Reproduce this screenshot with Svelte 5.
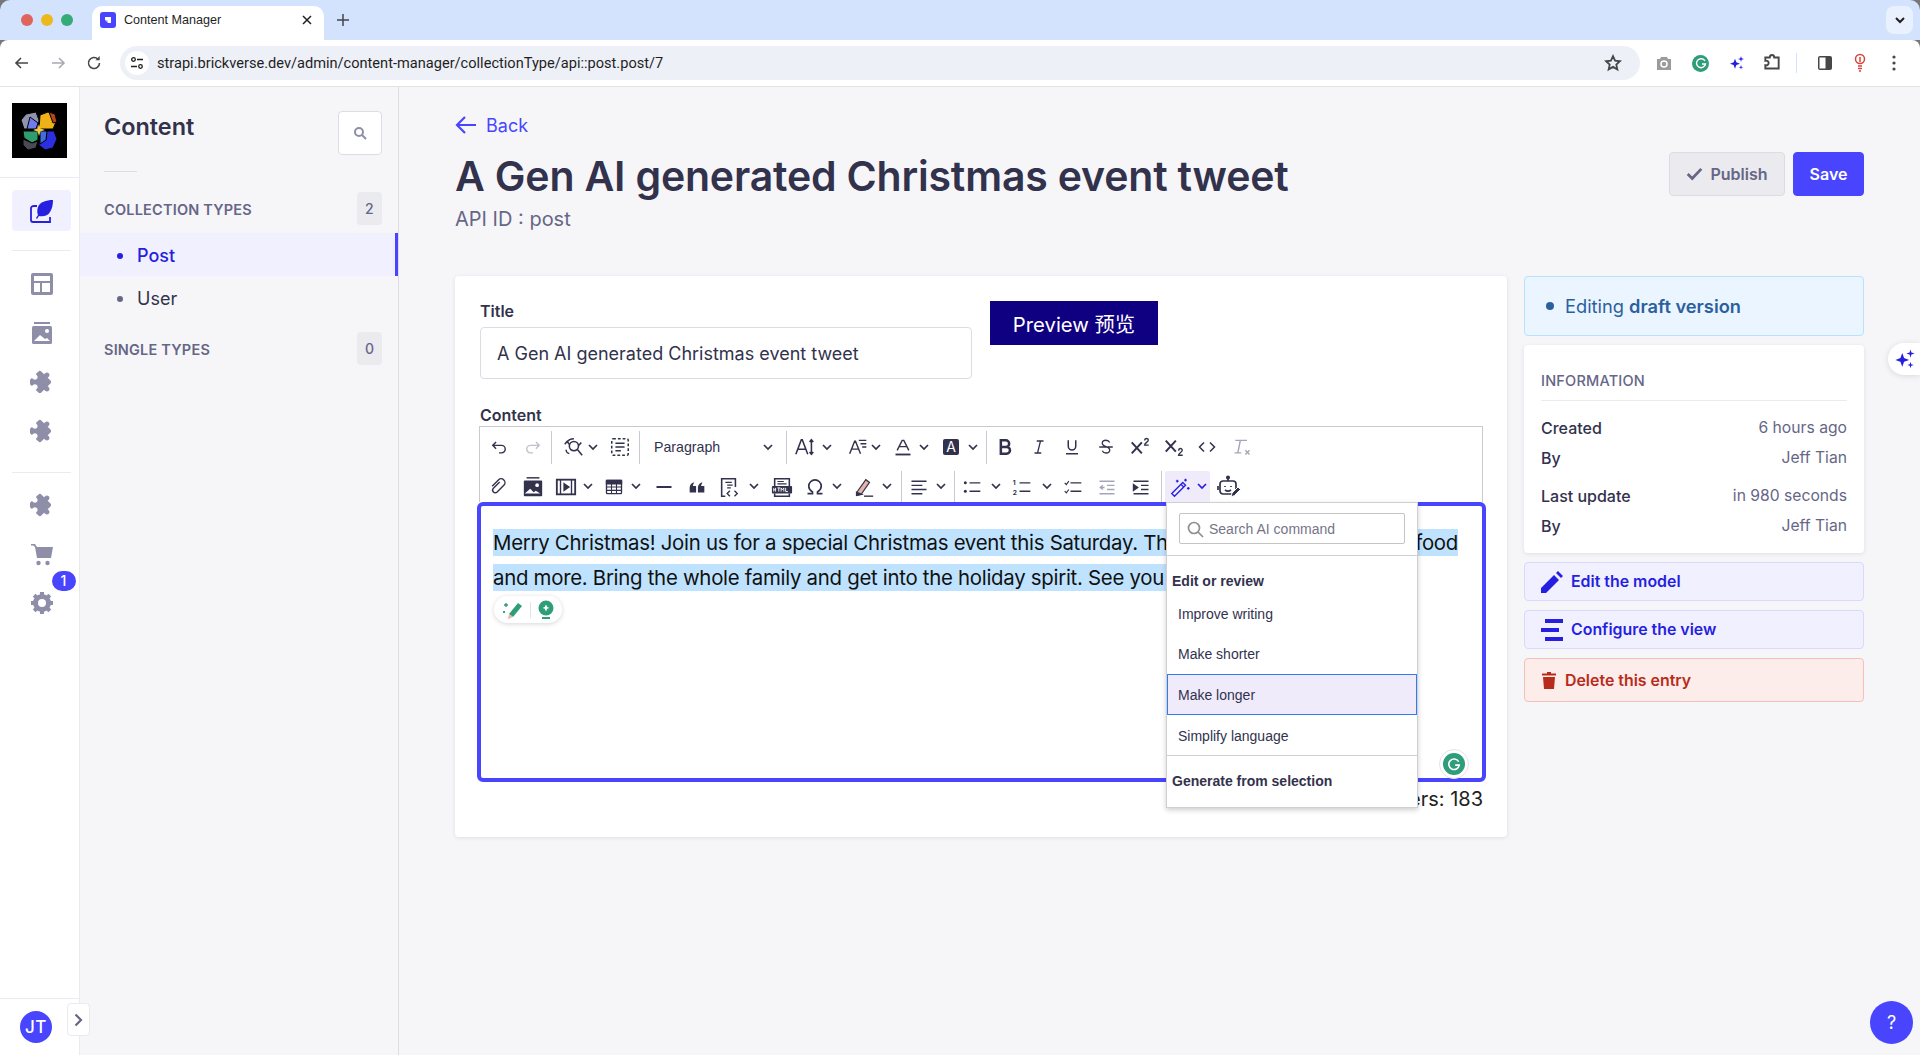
<script>
  // toolbar items are listed by the centre x of each button, gaps are derived below
  const icons = {
    undo: '<path d="M8.500 6 4.500 10l4 4M5 10h10a4.500 4.500 0 0 1 0 9h-3"/>',
    redo: '<path d="M15.500 6l4 4-4 4M19 10H9a4.500 4.500 0 0 0 0 9h3"/>',
    find: '<circle cx="13" cy="11" r="5"/><path d="m17 15 5 6M3 9l2.500-3L8 9M21 7l-2.500 3"/><path d="M5.500 7C7 4 10 3 13 3M8 19c-2 0-3.500-2-3.500-4"/>',
    selectall: '<rect x="3" y="3" width="18" height="18" rx="1.500" stroke-dasharray="3 2.200"/><path d="M7 8h10M7 12h10M7 16h6"/>',
    size: '<path d="M2 20 8 4h1l6 16M4.500 14.500h9M19 4v16M17 6.500 19 4l2 2.500M17 17.500l2 2.500 2-2.500"/>',
    family: '<path d="M2 20 8 5h1l6 15M4.500 14.500h8M13 4h9M15 8h7M17 12h5"/>',
    color: '<path d="M5 16 11 4h2l6 12M7.500 11.500h9"/><path d="M3 21h18" stroke-width="2.200"/>',
    bold: '<path d="M7 4h6a4 4 0 0 1 0 8H7zM7 12h7a4 4 0 0 1 0 8H7z" stroke-width="3"/>',
    italic: '<path d="M9 4h9M6 20h9M14 4l-4 16"/>',
    underline: '<path d="M7 3v8a5 5 0 0 0 10 0V3M4 21h16" stroke-width="2"/>',
    strike: '<path d="M17 6c-1-2-3-3-5-3-3 0-5 1.500-5 4s2 3.500 5 4.500c3 1 5 2 5 4.500s-2 4-5 4c-2 0-4-1-5-3M3 12h18"/>',
    sup: '<path d="M3 7l11 12M14 7 3 19" stroke-width="2.200"/><path d="M17 5c0-3 4-3 4-.5 0 2-4 3-4 5.500h4.500" stroke-width="1.500"/>',
    sub: '<path d="M3 5l11 12M14 5 3 17" stroke-width="2.200"/><path d="M17 16c0-3 4-3 4-.5 0 2-4 3-4 5.500h4.500" stroke-width="1.500"/>',
    code: '<path d="m8 6-6 6 6 6M16 6l6 6-6 6" stroke-width="2"/>',
    clear: '<g stroke="#a5a5ba"><path d="M4 4h14M10 4 7 19M3 19h8M16 16l5 5M21 16l-5 5"/></g>',
    link: '<path d="M14 6 6.500 13.500a3 3 0 0 0 4.500 4.500l8-8a4.500 4.500 0 0 0-6.500-6.500L5 11"/>',
    image: '<path d="M5 2h14" stroke-width="1.600"/><rect x="2" y="5" width="20" height="17" fill="#32324d" stroke="none" rx="1"/><circle cx="16.500" cy="10" r="2" fill="#fff" stroke="none"/><path d="m3 19 6-5 5 5H3zM11 19l4-3 5 3h-9z" fill="#fff" stroke="none"/>',
    media: '<rect x="2" y="4" width="20" height="16" stroke-width="2"/><path d="M6 4v16M18 4v16" stroke-width="1.500"/><path d="m10 8.500 5 3.500-5 3.500z" fill="#32324d"/>',
    table: '<rect x="3" y="4" width="18" height="16" rx="1" stroke-width="1.600"/><path d="M3 4h18v4H3z" fill="#32324d"/><path d="M3 12h18M3 16h18M9 8v12M15 8v12" stroke-width="1.300"/>',
    hr: '<path d="M3 12h18" stroke-width="2.400"/>',
    quote: '<path d="M4 18v-5c0-3 2-6 5-6-1 1.500-1.500 3-1.500 4H11v7zM13 18v-5c0-3 2-6 5-6-1 1.500-1.500 3-1.500 4H20v7z" fill="#32324d" stroke="none"/>',
    snippet: '<path d="M8 22H4V3h15v9"/><path d="M8 7h7M10 10h6M10 13h4" stroke-width="1.300"/><path d="m13 16-3 3 3 3M18 16l3 3-3 3" stroke-width="1.500"/>',
    html: '<path d="M4 11V3h16v8M4 19v3h16v-3"/><path d="M7 6h7M7 8.500h10" stroke-width="1.300"/><rect x="1" y="11" width="22" height="8" rx="1" fill="#32324d" stroke="none"/><path d="M3 13v4M3 15h2M5 13v4M7 13h3M8.500 13v4M11 17v-4l1.500 2 1.500-2v4M16 13v4h2.500" stroke="#fff" stroke-width="1"/>',
    omega: '<path d="M3 20h6v-2c-3-2-4.500-4-4.500-7a7.500 7.500 0 0 1 15 0c0 3-1.500 5-4.500 7v2h6" stroke-width="2"/>',
    pen: '<path d="M4 18 14 4l4 3L9 20l-5 1z" fill="#e7b3a6" stroke="#32324d" stroke-width="1.300"/><path d="M4 18l5 2-5 1z" fill="#32324d"/><path d="M12 22h10" stroke-width="1.500"/>',
    align: '<path d="M3 5h18M3 10h13M3 15h18M3 20h13"/>',
    bullets: '<circle cx="4" cy="7" r="1.800" fill="#32324d" stroke="none"/><circle cx="4" cy="17" r="1.800" fill="#32324d" stroke="none"/><path d="M9 7h13M9 17h13"/>',
    numbers: '<text x="1" y="10" font-size="8" font-family="Inter" font-weight="700" fill="#32324d" stroke="none">1</text><text x="1" y="21" font-size="8" font-family="Inter" font-weight="700" fill="#32324d" stroke="none">2</text><path d="M9 7h13M9 17h13"/>',
    todo: '<path d="m2 7 2 2 3-4M2 17l2 2 3-4" stroke-width="1.400"/><path d="M9 7h13M9 17h13"/>',
    outdent: '<g stroke="#a5a5ba"><path d="M3 5h18M12 10h9M12 15h9M3 20h18M9 12.500H4"/><path d="m7 10-3 2.500 3 2.500"/></g>',
    indent: '<path d="M3 5h18M12 10h9M12 15h9M3 20h18"/><path d="m3 9 5 3.500-5 3.500z" fill="#32324d"/>',
    wand: '<g stroke="#271fe0"><path d="M3 19 15 7l3 3L6 22z"/><path d="m13 9 3 3M18 3v3M16.500 4.500h3M9 4v3M7.500 5.500h3M21 12v3M19.500 13.500h3" stroke-width="1.300"/></g>',
    robot: '<rect x="3" y="6" width="16" height="13" rx="3"/><path d="M11 6V3M1 11v4M8 11v1M14 11v1M8 15c2 1.500 4 1.500 6 0"/><circle cx="11" cy="2.500" r="1.200" fill="#32324d"/><path d="m14 22 1-4 6-6 2.500 2.500-6 6z" fill="#32324d" stroke="#fff" stroke-width="1"/>'
  };

  const row1 = [
    { i: 'undo', c: 500, s: 20 }, { i: 'redo', c: 534, s: 20, dim: true }, { sep: true, c: 552 },
    { i: 'find', c: 574, s: 22 }, { caret: true, c: 594 }, { i: 'selectall', c: 621, s: 22 }, { sep: true, c: 640 },
    { label: 'Paragraph', c: 712, w: 114 }, { caret: true, c: 769 }, { sep: true, c: 787 },
    { i: 'size', c: 806, s: 22 }, { caret: true, c: 828 }, { i: 'family', c: 859, s: 20 }, { caret: true, c: 877 },
    { i: 'color', c: 904, s: 20 }, { caret: true, c: 925 }, { box: true, c: 952, w: 16 }, { caret: true, c: 974 }, { sep: true, c: 987 },
    { i: 'bold', c: 1006, s: 20 }, { i: 'italic', c: 1040, s: 18 }, { i: 'underline', c: 1073, s: 18 }, { i: 'strike', c: 1107, s: 18 },
    { i: 'sup', c: 1141, s: 22 }, { i: 'sub', c: 1175, s: 22 }, { i: 'code', c: 1208, s: 18 }, { i: 'clear', c: 1243, s: 20 }
  ];
  const row2 = [
    { i: 'link', c: 499, s: 20 }, { i: 'image', c: 534, s: 22 }, { i: 'media', c: 567, s: 22 }, { caret: true, c: 589 },
    { i: 'table', c: 615, s: 20 }, { caret: true, c: 637 }, { i: 'hr', c: 665, s: 20 }, { i: 'quote', c: 698, s: 22 },
    { i: 'snippet', c: 730, s: 22 }, { caret: true, c: 755 }, { i: 'html', c: 783, s: 22 }, { i: 'omega', c: 816, s: 20 }, { caret: true, c: 838 },
    { i: 'pen', c: 865, s: 22 }, { caret: true, c: 888 }, { sep: true, c: 902 },
    { i: 'align', c: 920, s: 20 }, { caret: true, c: 942 }, { sep: true, c: 955 },
    { i: 'bullets', c: 973, s: 20 }, { caret: true, c: 997 }, { i: 'numbers', c: 1023, s: 20 }, { caret: true, c: 1048 },
    { i: 'todo', c: 1074, s: 20 }, { i: 'outdent', c: 1108, s: 20 }, { i: 'indent', c: 1142, s: 20 }, { sep: true, c: 1162 },
    { wand: true, c: 1188.500, w: 45 }, { i: 'robot', c: 1230, s: 24 }
  ];

  // turn centres into left margins, so the rows stay plain flex rows
  function place(items) {
    let edge = 481;
    return items.map((it) => {
      const w = it.w ?? it.s ?? (it.sep ? 1 : it.caret ? 10 : 22);
      const ml = it.c - w / 2 - edge;
      edge = it.c + w / 2;
      return { ...it, w, ml };
    });
  }

  const rows = [place(row1), place(row2)];
  const navTop = ['layout', 'media', 'puzzle', 'puzzle'];
  const info = [
    { k: 'Created', v: '6 hours ago' },
    { k: 'By', v: 'Jeff Tian' },
    { k: 'Last update', v: 'in 980 seconds', gap: true },
    { k: 'By', v: 'Jeff Tian' }
  ];
</script>

{#snippet caret(color = '#32324d')}
  <svg class="caret" width="10" height="7" viewBox="0 0 10 7" fill="none" stroke={color} stroke-width="1.700"><path d="m1 1 4 4 4-4"/></svg>
{/snippet}

{#snippet puzzle()}
  <svg width="24" height="24" viewBox="0 0 24 24" fill="#8e8ea9">
    <path transform="rotate(45 12 12)" d="M20.500 11H19V7c0-1.100-.9-2-2-2h-4V3.500C13 2.120 11.880 1 10.500 1S8 2.120 8 3.500V5H4c-1.100 0-1.990.9-1.990 2v3.800H3.500c1.490 0 2.700 1.210 2.700 2.700s-1.210 2.700-2.700 2.700H2V20c0 1.100.9 2 2 2h3.800v-1.500c0-1.490 1.210-2.700 2.700-2.700 1.490 0 2.700 1.210 2.700 2.700V22H17c1.100 0 2-.9 2-2v-4h1.500c1.380 0 2.500-1.120 2.500-2.500S21.880 11 20.500 11z"/>
  </svg>
{/snippet}

{#snippet sparkle(color, size)}
  <svg width={size} height={size} viewBox="0 0 24 24" fill={color}>
    <path d="M9 5.500 11 11l5.500 2L11 15l-2 5.500L7 15l-5.500-2L7 11z"/>
    <path d="m18 1.500 1 3.500 3.500 1-3.500 1-1 3.500-1-3.500-3.500-1 3.500-1zM18 15l.8 2.700 2.700.8-2.700.8-.8 2.700-.8-2.700-2.700-.8 2.700-.8z"/>
  </svg>
{/snippet}

<div class="app">
  <header class="chrome">
    <div class="tabstrip">
      <div class="lights"><i class="red"></i><i class="yellow"></i><i class="green"></i></div>
      <div class="tab">
        <svg class="favicon" width="16" height="16" viewBox="0 0 16 16"><rect width="16" height="16" rx="3" fill="#4945ff"/><path d="M5 5h6v6H8V8H5z" fill="#fff"/><path d="M5 8h3v3z" fill="#cfcfff"/></svg>
        <span class="tab-title">Content Manager</span>
        <svg class="tab-close" width="10" height="10" viewBox="0 0 10 10" stroke="#1f1f1f" stroke-width="1.500"><path d="m1 1 8 8M9 1 1 9"/></svg>
      </div>
      <svg class="newtab" width="12" height="12" viewBox="0 0 12 12" stroke="#444746" stroke-width="1.500"><path d="M6 0v12M0 6h12"/></svg>
      <div class="tab-menu">
        <svg width="10" height="7" viewBox="0 0 10 7" fill="none" stroke="#1f1f1f" stroke-width="2"><path d="m1 1 4 4 4-4"/></svg>
      </div>
    </div>
    <div class="omnibar">
      <div class="navbtns">
        <svg width="16" height="16" viewBox="0 0 16 16" fill="none" stroke="#474747" stroke-width="1.600"><path d="M14 8H2M7 3 2 8l5 5"/></svg>
        <svg width="16" height="16" viewBox="0 0 16 16" fill="none" stroke="#a8abb0" stroke-width="1.600"><path d="M2 8h12M9 3l5 5-5 5"/></svg>
        <svg width="16" height="16" viewBox="0 0 16 16" fill="none" stroke="#474747" stroke-width="1.600"><path d="M13.500 8A5.500 5.500 0 1 1 12 4.200"/><path d="M13.700 1v4.200H9.500z" fill="#474747" stroke="none"/></svg>
      </div>
      <div class="url">
        <span class="tune">
          <svg width="14" height="14" viewBox="0 0 14 14" fill="none" stroke="#1f1f1f" stroke-width="1.300"><circle cx="3.500" cy="3.500" r="1.800"/><path d="M7 3.500h6M1 10.500h6"/><circle cx="10.500" cy="10.500" r="1.800"/></svg>
        </span>
        <span class="url-text">strapi.brickverse.dev/admin/content-manager/collectionType/api::post.post/7</span>
        <svg class="star" width="18" height="18" viewBox="0 0 24 24" fill="none" stroke="#474747" stroke-width="2.400"><path d="m12 3 2.800 6 6.400.7-4.800 4.400 1.400 6.400L12 17.200 6.200 20.500l1.400-6.400-4.800-4.400 6.400-.7z"/></svg>
      </div>
      <div class="exts">
        <svg width="16" height="14" viewBox="0 0 16 14"><path d="M1 3h3l1-2h6l1 2h3v11H1z" fill="#9a9a9f"/><circle cx="8" cy="8" r="3" fill="none" stroke="#fff" stroke-width="1.500"/></svg>
        <span class="g-dot"><svg width="12" height="12" viewBox="0 0 12 12" fill="none" stroke="#fff" stroke-width="1.400"><path d="M10 4a4.500 4.500 0 1 0 .5 3H7"/></svg></span>
        {@render sparkle('#271fe0', 16)}
        <svg class="ext-puzzle" width="20" height="20" viewBox="0 0 18 18" fill="none" stroke="#474747" stroke-width="1.700"><path d="M3 4h4c0-3 4-3 4 0h4v10H3v-3c2 .5 3-1 3-2s-1-2.500-3-2z"/></svg>
        <span class="ext-sep"></span>
        <svg width="16" height="16" viewBox="0 0 16 16"><rect x="1" y="1" width="14" height="14" rx="2" fill="#474747"/><rect x="2.500" y="2.500" width="6" height="11" fill="#fff"/></svg>
        <svg width="14" height="20" viewBox="0 0 14 20" fill="none" stroke="#d8433b" stroke-width="1.500"><circle cx="7" cy="6" r="4.500"/><path d="M7 4v5M5 13h4M5 15.500h4M6 18h2"/></svg>
        <svg class="ext-dots" width="4" height="16" viewBox="0 0 4 16" fill="#474747"><circle cx="2" cy="2" r="1.600"/><circle cx="2" cy="8" r="1.600"/><circle cx="2" cy="14" r="1.600"/></svg>
      </div>
    </div>
  </header>

  <div class="body">
    <nav class="nav">
      <div class="logo-wrap">
        <svg class="logo" width="55" height="55" viewBox="0 0 55 55">
          <rect width="55" height="55" fill="#000"/>
          <g stroke="#000" stroke-width="1">
            <path d="M14 11l10-2 3 8-1 9H12l-3-9z" fill="#8f93ad"/>
            <path d="M18 14l8 6-2 6h-9z" fill="#6f7cf0"/>
            <path d="M28 12l8-3 6 2 2 8-3 7H27z" fill="#eeb116"/>
            <path d="M37 9l6 2 2 8-4 1z" fill="#b5431f"/>
            <path d="M11 28h15v9l-6 3-8-5z" fill="#2f9c6e"/>
            <path d="M11 36l9 4 6-2-2 7-8 2-5-5z" fill="#4a4a55"/>
            <path d="M28 28h14l3 8-4 9-8 2-6-5z" fill="#2b2fe0"/>
            <path d="M28 28h7l-1 9-6 4z" fill="#3f6fd8"/>
          </g>
          <path d="m27 21 1.500 4.500L33 27l-4.500 1.500L27 33l-1.500-4.500L21 27l4.500-1.500z" fill="#f6c544"/>
        </svg>
      </div>
      <div class="nav-group first">
        <a class="nav-active" href="#content" aria-label="Content">
          <svg width="24" height="24" viewBox="0 0 24 24" fill="#271fe0">
            <path d="M1 9v12a2 2 0 0 0 2 2h17v-5" fill="none" stroke="#271fe0" stroke-width="1.800"/>
            <path d="M1 9c0-1 1-2 3-2h3" fill="none" stroke="#271fe0" stroke-width="1.800"/>
            <path d="M23 1c-7 0-13 2-15 7-1 3-1 6 0 8l-2 3 1 1 2-3c4 1 9 0 11-4 2-3 3-7 3-12z"/>
          </svg>
        </a>
      </div>
      <div class="nav-group sep-top">
        {#each navTop as n}
          <span class="nav-item">
            {#if n === 'layout'}
              <svg width="24" height="24" viewBox="0 0 24 24"><rect x="1" y="1" width="22" height="22" rx="2" fill="#8e8ea9"/><rect x="4" y="4" width="16" height="5" fill="#fff"/><rect x="4" y="11" width="6" height="9" fill="#fff"/><rect x="12" y="11" width="8" height="9" fill="#fff"/></svg>
            {:else if n === 'media'}
              <svg width="24" height="24" viewBox="0 0 24 24"><rect x="4" y="1" width="16" height="2" fill="#8e8ea9"/><rect x="2" y="5" width="20" height="18" rx="1.500" fill="#8e8ea9"/><circle cx="17" cy="10" r="2" fill="#fff"/><path d="m4 20 6-6 5 4 2-1 3 3z" fill="#fff"/></svg>
            {:else}
              {@render puzzle()}
            {/if}
          </span>
        {/each}
      </div>
      <div class="nav-group sep-top second">
        <span class="nav-item">{@render puzzle()}</span>
        <span class="nav-item">
          <svg width="24" height="24" viewBox="0 0 24 24" fill="#8e8ea9"><path d="M1 2h4l2 3h16l-2 11H7L5 5 3.500 3.500H1z"/><circle cx="8.500" cy="21" r="2.200"/><circle cx="17.500" cy="21" r="2.200"/></svg>
        </span>
        <span class="nav-item settings">
          <svg width="24" height="24" viewBox="0 0 24 24" fill="none" stroke="#8e8ea9"><circle cx="12" cy="12" r="6.500" stroke-width="5"/><path d="M12 1v4M12 19v4M1 12h4M19 12h4M4.200 4.200 7 7M17 17l2.800 2.800M19.800 4.200 17 7M7 17l-2.800 2.800" stroke-width="4"/></svg>
          <b class="count">1</b>
        </span>
      </div>
      <div class="nav-foot">
        <span class="avatar">JT</span>
        <span class="collapse">
          <svg width="9" height="14" viewBox="0 0 9 14" fill="none" stroke="#666687" stroke-width="2.200"><path d="m1.500 1.500 5.500 5.500-5.500 5.500"/></svg>
        </span>
      </div>
    </nav>

    <aside class="subnav">
      <div class="sub-head">
        <h2>Content</h2>
        <span class="search-btn">
          <svg width="14" height="14" viewBox="0 0 14 14" fill="none" stroke="#8e8ea9" stroke-width="2"><circle cx="6" cy="6" r="4"/><path d="m9 9 4 4"/></svg>
        </span>
      </div>
      <div class="sub-rule"></div>
      <div class="sub-section">
        <span>COLLECTION TYPES</span><b>2</b>
      </div>
      <a class="link current" href="#post"><i></i>Post</a>
      <a class="link" href="#user"><i></i>User</a>
      <div class="sub-section single">
        <span>SINGLE TYPES</span><b>0</b>
      </div>
    </aside>

    <main class="main">
      <a class="back" href="#back">
        <svg width="22" height="20" viewBox="0 0 22 20" fill="none" stroke="#4945ff" stroke-width="2.200"><path d="M21 10H2M10 2l-8 8 8 8"/></svg>
        Back
      </a>
      <div class="head">
        <div>
          <h1>A Gen AI generated Christmas event tweet</h1>
          <p class="api">API ID : post</p>
        </div>
        <div class="actions">
          <button class="publish">
            <svg width="17" height="14" viewBox="0 0 15 12" fill="none" stroke="#666687" stroke-width="2.400"><path d="m1.500 6 4 4 8-8.500"/></svg>
            Publish
          </button>
          <button class="save">Save</button>
        </div>
      </div>

      <div class="columns">
        <section class="card">
          <div class="title-row">
            <div class="field">
              <span class="label">Title</span>
              <div class="input">A Gen AI generated Christmas event tweet</div>
            </div>
            <button class="preview">Preview 预览</button>
          </div>

          <span class="label content-label">Content</span>
          <div class="toolbar">
            {#each rows as row, r}
              <div class="tb-row" class:second={r === 1}>
                {#each row as it}
                  {#if it.sep}
                    <span class="tb-sep" style="margin-left: {it.ml}px"></span>
                  {:else if it.caret}
                    <span class="tb-cell" style="margin-left: {it.ml}px; width: {it.w}px">{@render caret()}</span>
                  {:else if it.label}
                    <span class="tb-label" style="margin-left: {it.ml}px; width: {it.w}px">{it.label}</span>
                  {:else if it.box}
                    <span class="tb-box" style="margin-left: {it.ml}px">A</span>
                  {:else if it.wand}
                    <span class="tb-wand" style="margin-left: {it.ml}px; width: {it.w}px">
                      <svg width="22" height="22" viewBox="0 0 24 24" fill="none" stroke="#271fe0" stroke-width="1.500">{@html icons.wand}</svg>
                      {@render caret('#271fe0')}
                    </span>
                  {:else}
                    <span class="tb-cell" class:dim={it.dim} style="margin-left: {it.ml}px; width: {it.w}px">
                      <svg width={it.s} height={it.s} viewBox="0 0 24 24" fill="none" stroke="currentColor" stroke-width="1.700">{@html icons[it.i]}</svg>
                    </span>
                  {/if}
                {/each}
              </div>
            {/each}
          </div>

          <div class="editor">
            <p><mark>Merry Christmas! Join us for a special Christmas event this Saturday. There will be singing, festive food<br>and more. Bring the whole family and get into the holiday spirit. See you there!</mark></p>
            <div class="assist">
              <svg width="22" height="22" viewBox="0 0 22 22">
                <path d="M7 15 16 4l4 3-9 11z" fill="#2f9c7a"/>
                <path d="M7 15l4 3-5 2z" fill="#eab5a8"/>
                <path d="M4 4v4M2 6h4M2 12v2M1 13h2" stroke="#2f9c7a" stroke-width="1.400"/>
              </svg>
              <span class="assist-sep"></span>
              <svg width="18" height="20" viewBox="0 0 18 20">
                <circle cx="9" cy="8" r="7.500" fill="#2f9c7a"/>
                <path d="M9 4.500 10.200 7l2.300.9-2.300.9L9 11.500 7.800 8.800l-2.300-.9L7.800 7z" fill="#fff"/>
                <path d="M5 18h8" stroke="#2f9c7a" stroke-width="2"/>
              </svg>
            </div>
            <span class="g-badge"><span><svg width="14" height="14" viewBox="0 0 12 12" fill="none" stroke="#fff" stroke-width="1.400"><path d="M10 4a4.500 4.500 0 1 0 .5 3H7"/></svg></span></span>
          </div>
          <div class="counter">Characters: 183</div>

          <div class="ai-menu">
            <div class="ai-search">
              <div>
                <svg width="17" height="17" viewBox="0 0 17 17" fill="none" stroke="#8f8f8f" stroke-width="1.700"><circle cx="7" cy="7" r="5.500"/><path d="m11 11 5 5"/></svg>
                <span>Search AI command</span>
              </div>
            </div>
            <div class="ai-group">Edit or review</div>
            <div class="ai-item">Improve writing</div>
            <div class="ai-item shorter">Make shorter</div>
            <div class="ai-item on">Make longer</div>
            <div class="ai-item">Simplify language</div>
            <div class="ai-gen">Generate from selection</div>
          </div>
        </section>

        <aside class="side">
          <div class="draft"><i></i><span>Editing <b>draft version</b></span></div>
          <div class="info">
            <h3>INFORMATION</h3>
            {#each info as row}
              <div class="info-row" class:gap={row.gap}><b>{row.k}</b><span>{row.v}</span></div>
            {/each}
          </div>
          <a class="side-btn" href="#model">
            <svg width="22" height="22" viewBox="0 0 22 22" fill="#271fe0"><path d="M0 17 13 4l5 5L5 22H0zM15 2l2-2 5 5-2 2z"/></svg>
            Edit the model
          </a>
          <a class="side-btn" href="#view">
            <svg width="22" height="22" viewBox="0 0 22 22" fill="#271fe0"><rect x="4" width="18" height="4"/><rect y="9" width="18" height="4"/><rect x="4" y="18" width="18" height="4"/></svg>
            Configure the view
          </a>
          <a class="side-btn danger" href="#delete">
            <svg width="14" height="17" viewBox="0 0 14 17" fill="#b72b1a"><path d="M5 0h4v1.500h5V3.500H0V1.500h5zM1 5h12l-1 12H2z"/></svg>
            Delete this entry
          </a>
        </aside>
      </div>
    </main>
  </div>

  <div class="ai-tab">{@render sparkle('#271fe0', 22)}</div>
  <div class="help">?</div>
</div>

<style>
  :global(body) {
    margin: 0;
    background: #f6f6f9;
  }

  .app {
    position: relative;
    height: 1055px;
    display: flex;
    flex-direction: column;
    overflow: hidden;
    font-family: Inter, "Noto Sans CJK SC", sans-serif;
    color: #32324d;
  }

  .chrome {
    flex: none;
    background: #77777a;
  }

  .tabstrip {
    height: 40px;
    display: flex;
    align-items: flex-end;
    background: #d3e3fd;
    border-top-left-radius: 10px;
    border-top-right-radius: 10px;
  }

  .lights {
    width: 92px;
    height: 40px;
    display: flex;
    align-items: center;
    gap: 8px;
    padding-left: 21px;
    box-sizing: border-box;
  }

  .lights i {
    width: 12px;
    height: 12px;
    border-radius: 50%;
  }

  .red { background: #e0645c; }
  .yellow { background: #ebb91c; }
  .green { background: #35ab77; }

  .tab {
    width: 232px;
    height: 34px;
    box-sizing: border-box;
    background: #fff;
    border-radius: 10px 10px 0 0;
    display: flex;
    align-items: center;
    padding: 0 12px 6px 8px;
  }

  .tab-title {
    margin-left: 8px;
    font-family: "Liberation Sans", sans-serif;
    font-size: 12.600px;
    color: #1f1f1f;
    flex: 1;
  }

  .newtab {
    margin: 0 0 14px 13px;
  }

  .tab-menu {
    margin: 0 7px 6px auto;
    width: 27px;
    height: 28px;
    border-radius: 8px;
    background: #e9f1fe;
    display: flex;
    align-items: center;
    justify-content: center;
  }

  .omnibar {
    height: 47px;
    box-sizing: border-box;
    background: #fff;
    border-bottom: 1px solid #e3e3e3;
    display: flex;
    align-items: center;
    border-radius: 8px 8px 0 0;
  }

  .navbtns {
    width: 120px;
    display: flex;
    gap: 20px;
    padding-left: 14px;
    box-sizing: border-box;
  }

  .url {
    width: 1520px;
    height: 34px;
    border-radius: 17px;
    background: #eef0f8;
    display: flex;
    align-items: center;
    padding: 0 18px 0 5px;
    box-sizing: border-box;
  }

  .tune {
    width: 24px;
    height: 24px;
    border-radius: 50%;
    background: #fff;
    display: flex;
    align-items: center;
    justify-content: center;
  }

  .url-text {
    margin-left: 8px;
    flex: 1;
    font-family: Roboto, sans-serif;
    font-size: 14.600px;
    color: #1f1f1f;
  }

  .exts {
    flex: 1;
    display: flex;
    align-items: center;
    gap: 20px;
    padding-left: 16px;
  }

  .ext-puzzle {
    margin: 0 -3px 0 -3px;
  }

  .ext-dots {
    margin-left: 5px;
  }

  .g-dot {
    width: 17px;
    height: 17px;
    border-radius: 50%;
    background: #2f9c7a;
    display: flex;
    align-items: center;
    justify-content: center;
  }

  .ext-sep {
    width: 1px;
    height: 20px;
    background: #d3e3fd;
    margin: 0 0 0 -3px;
  }

  .body {
    flex: 1;
    min-height: 0;
    display: flex;
    background: #f6f6f9;
  }

  .nav {
    width: 80px;
    flex: none;
    box-sizing: border-box;
    background: #fff;
    border-right: 1px solid #eaeaef;
    display: flex;
    flex-direction: column;
  }

  .logo-wrap {
    height: 91px;
    padding: 16px 0 0 12px;
    box-sizing: border-box;
    border-bottom: 1px solid #eaeaef;
  }

  .logo {
    display: block;
  }

  .nav-group {
    display: flex;
    flex-direction: column;
    align-items: center;
  }

  .nav-group.first {
    padding: 12px 0 0 4px;
  }

  .nav-active {
    width: 59px;
    height: 41px;
    border-radius: 4px;
    background: #f0f0ff;
    display: flex;
    align-items: center;
    justify-content: center;
  }

  .sep-top {
    margin: 19px 8px 0 12px;
    padding-top: 8px;
    border-top: 1px solid #eaeaef;
  }

  .sep-top.second {
    margin-top: 17px;
    padding-top: 7px;
  }

  .nav-item {
    position: relative;
    width: 24px;
    height: 49px;
    display: flex;
    align-items: center;
    justify-content: center;
  }

  .nav-item svg {
    display: block;
  }

  .count {
    position: absolute;
    left: 22px;
    top: -7px;
    min-width: 24px;
    height: 20px;
    border-radius: 10px;
    background: #4945ff;
    color: #fff;
    font-size: 14px;
    font-weight: 500;
    line-height: 20px;
    text-align: center;
  }

  .nav-foot {
    margin-top: auto;
    border-top: 1px solid #eaeaef;
    height: 57px;
    position: relative;
    display: flex;
    align-items: center;
    padding-left: 20px;
    box-sizing: border-box;
  }

  .avatar {
    width: 32px;
    height: 32px;
    border-radius: 50%;
    background: #4945ff;
    color: #fff;
    font-size: 17px;
    font-weight: 500;
    line-height: 32px;
    text-align: center;
    letter-spacing: .5px;
  }

  .collapse {
    position: absolute;
    left: 67px;
    top: 4px;
    width: 23px;
    height: 33px;
    box-sizing: border-box;
    background: #fff;
    border: 1px solid #eaeaef;
    border-radius: 4px;
    display: flex;
    align-items: center;
    justify-content: center;
    z-index: 2;
  }

  .subnav {
    width: 319px;
    flex: none;
    box-sizing: border-box;
    border-right: 1px solid #dcdce4;
    background: #f6f6f9;
    padding-top: 24px;
  }

  .sub-head {
    display: flex;
    justify-content: space-between;
    align-items: flex-start;
    padding: 0 16px 0 24px;
    height: 44px;
  }

  h2 {
    margin: 0;
    font-size: 23.400px;
    line-height: 32px;
    font-weight: 600;
  }

  .search-btn {
    width: 44px;
    height: 44px;
    box-sizing: border-box;
    background: #fff;
    border: 1px solid #dcdce4;
    border-radius: 4px;
    display: flex;
    align-items: center;
    justify-content: center;
  }

  .sub-rule {
    width: 33px;
    height: 1px;
    background: #dcdce4;
    margin: 16px 0 20px 24px;
  }

  .sub-section {
    height: 33px;
    display: flex;
    align-items: center;
    justify-content: space-between;
    padding: 0 16px 0 24px;
    color: #666687;
    font-size: 14.500px;
    font-weight: 600;
    letter-spacing: .2px;
  }

  .sub-section span {
    padding-top: 2px;
  }

  .sub-section b {
    width: 25px;
    height: 33px;
    border-radius: 4px;
    background: #eaeaef;
    font-size: 14px;
    font-weight: 500;
    line-height: 33px;
    text-align: center;
  }

  .sub-section.single {
    margin-top: 13px;
  }

  .link {
    height: 43px;
    box-sizing: border-box;
    display: flex;
    align-items: center;
    color: #32324d;
    font-size: 18px;
    text-decoration: none;
    padding: 2px 0 0 37px;
  }

  .link.current {
    margin-top: 8px;
  }

  .link i {
    width: 6px;
    height: 6px;
    border-radius: 50%;
    background: #666687;
    margin-right: 14px;
  }

  .current {
    background: #f0f0ff;
    color: #271fe0;
    border-right: 3px solid #4945ff;
    font-weight: 500;
  }

  .current i {
    background: #271fe0;
  }

  .main {
    flex: 1;
    min-width: 0;
    padding: 26px 56px 0;
    position: relative;
  }

  .back {
    display: flex;
    align-items: center;
    gap: 9px;
    height: 24px;
    color: #4945ff;
    font-size: 18px;
    text-decoration: none;
  }

  .head {
    display: flex;
    justify-content: space-between;
    align-items: flex-start;
    margin-top: 15px;
  }

  h1 {
    margin: 0;
    font-size: 41px;
    line-height: 48px;
    letter-spacing: -.18px;
    font-weight: 600;
  }

  .api {
    margin: 7px 0 0;
    font-size: 20px;
    line-height: 24px;
    color: #666687;
  }

  .actions {
    display: flex;
    gap: 8px;
  }

  button {
    font-family: inherit;
    border-radius: 4px;
    cursor: pointer;
  }

  .publish {
    width: 116px;
    height: 44px;
    background: #eaeaef;
    border: 1px solid #dcdce4;
    color: #666687;
    font-size: 16px;
    font-weight: 600;
    display: flex;
    align-items: center;
    justify-content: center;
    gap: 7px;
  }

  .save {
    width: 71px;
    height: 44px;
    background: #4945ff;
    border: 1px solid #4945ff;
    color: #fff;
    font-size: 16px;
    font-weight: 600;
  }

  .columns {
    display: flex;
    gap: 17px;
    margin-top: 45px;
    align-items: flex-start;
  }

  .card {
    position: relative;
    width: 1052px;
    height: 561px;
    box-sizing: border-box;
    background: #fff;
    border-radius: 4px;
    box-shadow: 0 1px 4px rgba(33, 33, 52, .1);
    padding: 25px 24px 0 25px;
    display: flex;
    flex-direction: column;
  }

  .title-row {
    display: flex;
    gap: 18px;
    align-items: flex-start;
  }

  .field {
    width: 492px;
  }

  .label {
    display: block;
    font-size: 16px;
    line-height: 20px;
    font-weight: 600;
  }

  .input {
    margin-top: 6px;
    height: 52px;
    box-sizing: border-box;
    border: 1px solid #dcdce4;
    border-radius: 4px;
    padding-left: 16px;
    display: flex;
    align-items: center;
    font-size: 18px;
  }

  .preview {
    width: 168px;
    height: 44px;
    background: #0f0082;
    border: 0;
    border-radius: 0;
    color: #fff;
    font-size: 20.300px;
  }

  .content-label {
    margin-top: 26px;
  }

  .toolbar {
    margin-top: 1px;
    border: 1px solid #c9c9cf;
    border-bottom: 0;
    margin-left: -1px;
    box-sizing: border-box;
  }

  .tb-row {
    height: 40px;
    display: flex;
    align-items: center;
    color: #32324d;
  }

  .tb-row.second {
    height: 35px;
    padding-top: 4px;
    box-sizing: border-box;
    align-items: stretch;
  }

  .tb-cell {
    flex: none;
    display: flex;
    align-items: center;
    justify-content: center;
  }

  .tb-cell.dim {
    color: #c0c0cf;
  }

  .tb-sep {
    flex: none;
    width: 1px;
    height: 33px;
    background: #c9c9cf;
  }

  .second .tb-sep {
    height: auto;
  }

  .tb-label {
    flex: none;
    box-sizing: border-box;
    font-family: "Liberation Sans", sans-serif;
    font-size: 14.200px;
    color: #32324d;
  }

  .tb-box {
    flex: none;
    width: 16px;
    height: 16px;
    background: #32324d;
    color: #fff;
    border-radius: 2px;
    font-size: 14px;
    line-height: 16px;
    text-align: center;
  }

  .tb-wand {
    flex: none;
    background: #f0ebfb;
    border-radius: 2px 2px 0 0;
    display: flex;
    align-items: center;
    justify-content: center;
    gap: 6px;
    position: relative;
    z-index: 3;
  }

  .editor {
    position: relative;
    height: 280px;
    box-sizing: border-box;
    margin: 0 -3px 0 -3px;
    border: 4px solid #4945ff;
    border-radius: 6px;
    padding: 19px 12px 0 12px;
    background: #fff;
  }

  .editor p {
    margin: 0;
    font-size: 20.400px;
    line-height: 35px;
    letter-spacing: -.28px;
    color: #111;
    white-space: nowrap;
  }

  mark {
    background: #bfe3ff;
    color: inherit;
    padding: 1px 0;
  }

  .assist {
    position: absolute;
    left: 13px;
    top: 90px;
    width: 68px;
    height: 27px;
    box-sizing: border-box;
    border-radius: 14px;
    background: #fff;
    box-shadow: 0 1px 5px rgba(0, 0, 0, .16);
    display: flex;
    align-items: center;
    justify-content: center;
    gap: 6px;
  }

  .assist-sep {
    width: 1px;
    height: 16px;
    background: #e4e4e4;
  }

  .g-badge {
    position: absolute;
    right: 13px;
    bottom: -1px;
    width: 30px;
    height: 30px;
    border-radius: 50%;
    border: 1px solid #e4e4e4;
    box-sizing: border-box;
    background: #fff;
    display: flex;
    align-items: center;
    justify-content: center;
  }

  .g-badge span {
    width: 22px;
    height: 22px;
    border-radius: 50%;
    background: #2f9c7a;
    display: flex;
    align-items: center;
    justify-content: center;
  }

  .counter {
    margin-top: 5px;
    line-height: 24px;
    text-align: right;
    font-size: 20px;
    color: #222;
  }

  .ai-menu {
    position: absolute;
    left: 711px;
    top: 226px;
    width: 252px;
    height: 306px;
    box-sizing: border-box;
    background: #fff;
    border: 1px solid #d0d0d0;
    box-shadow: 0 2px 5px rgba(0, 0, 0, .2);
    font-family: "Liberation Sans", sans-serif;
    font-size: 14px;
    color: #32324d;
    z-index: 2;
  }

  .ai-search {
    height: 53px;
    box-sizing: border-box;
    padding: 10px 12px 0;
    border-bottom: 1px solid #d0d0d0;
  }

  .ai-search div {
    height: 31px;
    box-sizing: border-box;
    border: 1px solid #c4c4c4;
    border-radius: 2px;
    display: flex;
    align-items: center;
    gap: 5px;
    padding: 1px 0 0 7px;
    color: #757589;
  }

  .ai-group {
    height: 37px;
    padding: 13px 0 0 5px;
    line-height: 25px;
    font-weight: 700;
    box-sizing: border-box;
  }

  .ai-gen {
    border-top: 1px solid #d0d0d0;
    height: 51px;
    box-sizing: border-box;
    padding-left: 5px;
    line-height: 50px;
    font-weight: 700;
  }

  .ai-item {
    height: 40px;
    line-height: 42px;
    padding-left: 11px;
    box-sizing: border-box;
  }

  .ai-item.shorter {
    height: 41px;
    line-height: 43px;
  }

  .ai-item.on {
    height: 41px;
    background: #f0ebfb;
    border: 1px solid #2f7cf6;
    line-height: 41px;
    padding-left: 10px;
  }

  .side {
    width: 340px;
    display: flex;
    flex-direction: column;
    gap: 9px;
  }

  .draft {
    height: 60px;
    box-sizing: border-box;
    background: #eaf5ff;
    border: 1px solid #b8e1ff;
    border-radius: 4px;
    display: flex;
    align-items: center;
    padding-left: 21px;
    font-size: 18.250px;
    color: #2c5f9e;
  }

  .draft i {
    width: 8px;
    height: 8px;
    border-radius: 50%;
    background: #2c5f9e;
    margin-right: 11px;
  }

  .draft b {
    font-weight: 600;
  }

  .info {
    height: 208px;
    box-sizing: border-box;
    background: #fff;
    border-radius: 4px;
    box-shadow: 0 1px 4px rgba(33, 33, 52, .1);
    padding: 26px 17px 0 17px;
  }

  h3 {
    margin: 0 0 16px;
    padding-bottom: 9px;
    border-bottom: 1px solid #eaeaef;
    font-size: 14.500px;
    line-height: 20px;
    font-weight: 500;
    color: #666687;
    letter-spacing: .2px;
  }

  .info-row {
    display: flex;
    justify-content: space-between;
    height: 30px;
    font-size: 15.700px;
    line-height: 22px;
  }

  .info-row.gap {
    margin-top: 8px;
  }

  .info-row b {
    font-weight: 500;
    font-size: 16px;
  }

  .info-row span {
    color: #666687;
  }

  .side-btn {
    height: 39px;
    box-sizing: border-box;
    background: #f0f0ff;
    border: 1px solid #d9d8ff;
    border-radius: 4px;
    display: flex;
    align-items: center;
    gap: 8px;
    padding-left: 16px;
    color: #271fe0;
    font-size: 15.900px;
    font-weight: 600;
    text-decoration: none;
  }

  .side-btn.danger {
    height: 44px;
    background: #fcecea;
    border-color: #f5c0b8;
    color: #b72b1a;
    gap: 9px;
    padding-left: 17px;
  }

  .ai-tab {
    position: absolute;
    right: 0;
    top: 343px;
    width: 32px;
    height: 32px;
    border-radius: 16px 0 0 16px;
    background: #fff;
    box-shadow: 0 1px 6px rgba(0, 0, 0, .12);
    display: flex;
    align-items: center;
    justify-content: flex-end;
    padding-right: 4px;
    box-sizing: border-box;
  }

  .help {
    position: absolute;
    left: 1870px;
    top: 1001px;
    width: 43px;
    height: 43px;
    border-radius: 50%;
    background: #4945ff;
    color: #fff;
    font-size: 18px;
    line-height: 43px;
    text-align: center;
  }
</style>
